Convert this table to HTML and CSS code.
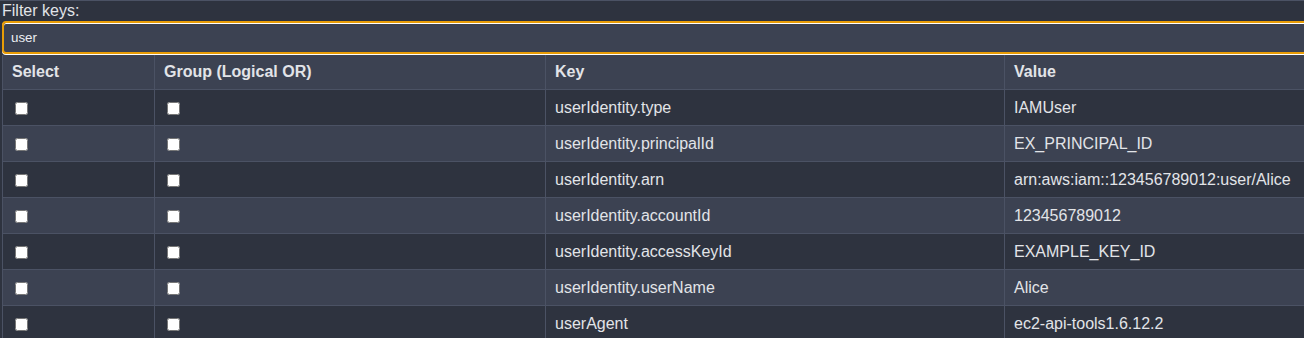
FILE: index.html
```html
<!DOCTYPE html>
<html>
<head>
<meta charset="utf-8">
<link rel="stylesheet" href="styles.css">
</head>
<body>
<div class="page">
  <label class="filter-label" for="filter">Filter keys:</label>
  <input class="filter-input" id="filter" type="text" value="user">
  <table class="keys">
    <colgroup>
      <col class="c-select"><col class="c-group"><col class="c-key"><col class="c-value">
    </colgroup>
    <thead>
      <tr><th>Select</th><th>Group (Logical OR)</th><th>Key</th><th>Value</th></tr>
    </thead>
    <tbody>
      <tr><td><input type="checkbox"></td><td><input type="checkbox"></td><td>userIdentity.type</td><td>IAMUser</td></tr>
      <tr><td><input type="checkbox"></td><td><input type="checkbox"></td><td>userIdentity.principalId</td><td>EX_PRINCIPAL_ID</td></tr>
      <tr><td><input type="checkbox"></td><td><input type="checkbox"></td><td>userIdentity.arn</td><td>arn:aws:iam::123456789012:user/Alice</td></tr>
      <tr><td><input type="checkbox"></td><td><input type="checkbox"></td><td>userIdentity.accountId</td><td>123456789012</td></tr>
      <tr><td><input type="checkbox"></td><td><input type="checkbox"></td><td>userIdentity.accessKeyId</td><td>EXAMPLE_KEY_ID</td></tr>
      <tr><td><input type="checkbox"></td><td><input type="checkbox"></td><td>userIdentity.userName</td><td>Alice</td></tr>
      <tr><td><input type="checkbox"></td><td><input type="checkbox"></td><td>userAgent</td><td>ec2-api-tools1.6.12.2</td></tr>
    </tbody>
  </table>
</div>
</body>
</html>
```

FILE: styles.css
```css
html, body {
  margin: 0;
  padding: 0;
  background: #2e333f;
  overflow: hidden;
}
.page {
  border-top: 1px solid #4b5264;
  padding: 1px 0 0 2px;
  width: 1340px;
  font-family: "Liberation Sans", Arial, sans-serif;
  color: #e2e4e8;
}
.filter-label {
  display: block;
  font-size: 16px;
  line-height: 18px;
  height: 18px;
}
.filter-input {
  display: block;
  box-sizing: border-box;
  width: 1336px;
  height: 33px;
  margin: 1px 0 1px 0;
  padding: 0 7px;
  border: 2px solid #e99d06;
  border-radius: 4px;
  background: #3c4252;
  color: #eceef2;
  font-family: "Liberation Sans", Arial, sans-serif;
  font-size: 13.33px;
  outline: none;
  box-shadow: inset 0 1px 0 #ffffff, 0 1px 0 #ffffff;
}
.keys {
  border-collapse: collapse;
  table-layout: fixed;
  width: 1336px;
  font-size: 16px;
}
.c-select { width: 152px; }
.c-group { width: 391px; }
.c-key { width: 459px; }
.c-value { width: 334px; }
.keys th, .keys td {
  border: 1px solid #4b5264;
  padding: 0 9px;
  text-align: left;
  height: 35px;
  box-sizing: content-box;
  white-space: nowrap;
}
.keys th {
  height: 34px;
  font-weight: bold;
  background: #3c4252;
  border-top: none;
}
.keys tbody tr:nth-child(odd) td { background: #2e333f; }
.keys tbody tr:nth-child(even) td { background: #3c4252; }
.keys input[type="checkbox"] {
  margin: 0 0 0 3px;
  vertical-align: middle;
  width: 13px;
  height: 13px;
}
```
